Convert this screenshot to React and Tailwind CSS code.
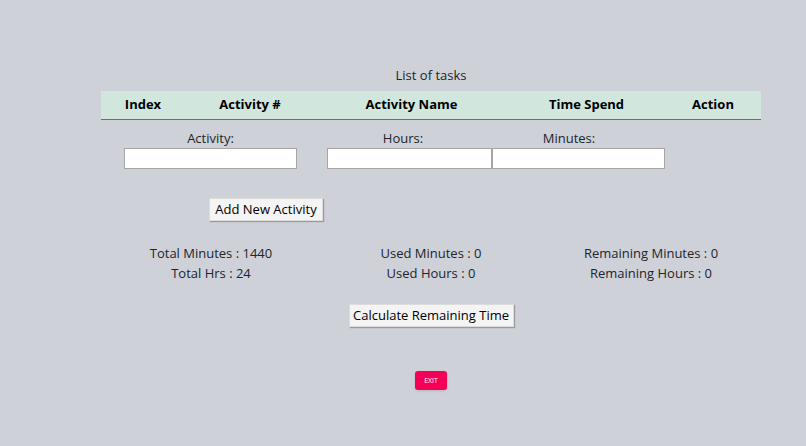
import React, { useState } from 'react';

const font = { fontFamily: '"Open Sans", "Noto Sans", sans-serif' };

export default function App() {
  const [totalMinutes] = useState(1440);
  const [usedMinutes] = useState(0);
  const [remaining] = useState(0);

  return (
    <div className="min-h-screen w-full bg-[#cfd1d8] text-[#212529]" style={font}>
      <div className="ml-[101px] w-[660px] pt-[65px]">
        {/* Task list */}
        <p className="text-center text-[13px] leading-[20px] mb-[6px]">List of tasks</p>
        <div className="grid grid-cols-[84px_130px_193px_157px_96px] h-[29px] items-center bg-[#d1e7dd] border-b border-[#6b6f74] text-[13px] font-bold text-black">
          <span className="text-center">Index</span>
          <span className="text-center">Activity #</span>
          <span className="text-center">Activity Name</span>
          <span className="text-center">Time Spend</span>
          <span className="text-center">Action</span>
        </div>

        {/* New activity inputs */}
        <div className="flex pt-[8px] text-[13px]">
          <label className="ml-[23px] w-[173px] flex flex-col items-center">
            <span className="leading-[20px]">Activity:</span>
            <input className="w-full h-[21px] bg-white border border-[#a6a6a6]" />
          </label>
          <label className="ml-[30px] w-[165px] flex flex-col items-center">
            <span className="leading-[20px] pr-[13px]">Hours:</span>
            <input className="w-full h-[21px] bg-white border border-[#a6a6a6]" />
          </label>
          <label className="w-[173px] flex flex-col items-center">
            <span className="leading-[20px] pr-[19px]">Minutes:</span>
            <input className="w-full h-[21px] bg-white border border-[#a6a6a6]" />
          </label>
        </div>

        <div className="pt-[27px] pl-[108px]">
          <button className="h-[23px] w-[114px] whitespace-nowrap bg-[#f4f4f4] border border-[#dcdcdc] shadow-[1px_1px_1px_#9a9a9a] text-[13px] text-black">
            Add New Activity
          </button>
        </div>

        {/* Totals */}
        <div className="grid grid-cols-3 pt-[22px] text-[13px] leading-[20px] text-center">
          <div>
            <p>Total Minutes : {totalMinutes}</p>
            <p>Total Hrs : {totalMinutes / 60}</p>
          </div>
          <div>
            <p>Used Minutes : {usedMinutes}</p>
            <p>Used Hours : {usedMinutes / 60}</p>
          </div>
          <div>
            <p>Remaining Minutes : {remaining}</p>
            <p>Remaining Hours : {remaining / 60}</p>
          </div>
        </div>

        <div className="flex justify-center pt-[21px]">
          <button className="h-[23px] w-[165px] whitespace-nowrap bg-[#f4f4f4] border border-[#dcdcdc] shadow-[1px_1px_1px_#9a9a9a] text-[13px] text-black">
            Calculate Remaining Time
          </button>
        </div>

        <div className="flex justify-center pt-[44px]">
          <button className="h-[19px] w-[32px] rounded-[3px] bg-[#f50057] text-white text-[7px] shadow-sm">
            EXIT
          </button>
        </div>
      </div>
    </div>
  );
}
